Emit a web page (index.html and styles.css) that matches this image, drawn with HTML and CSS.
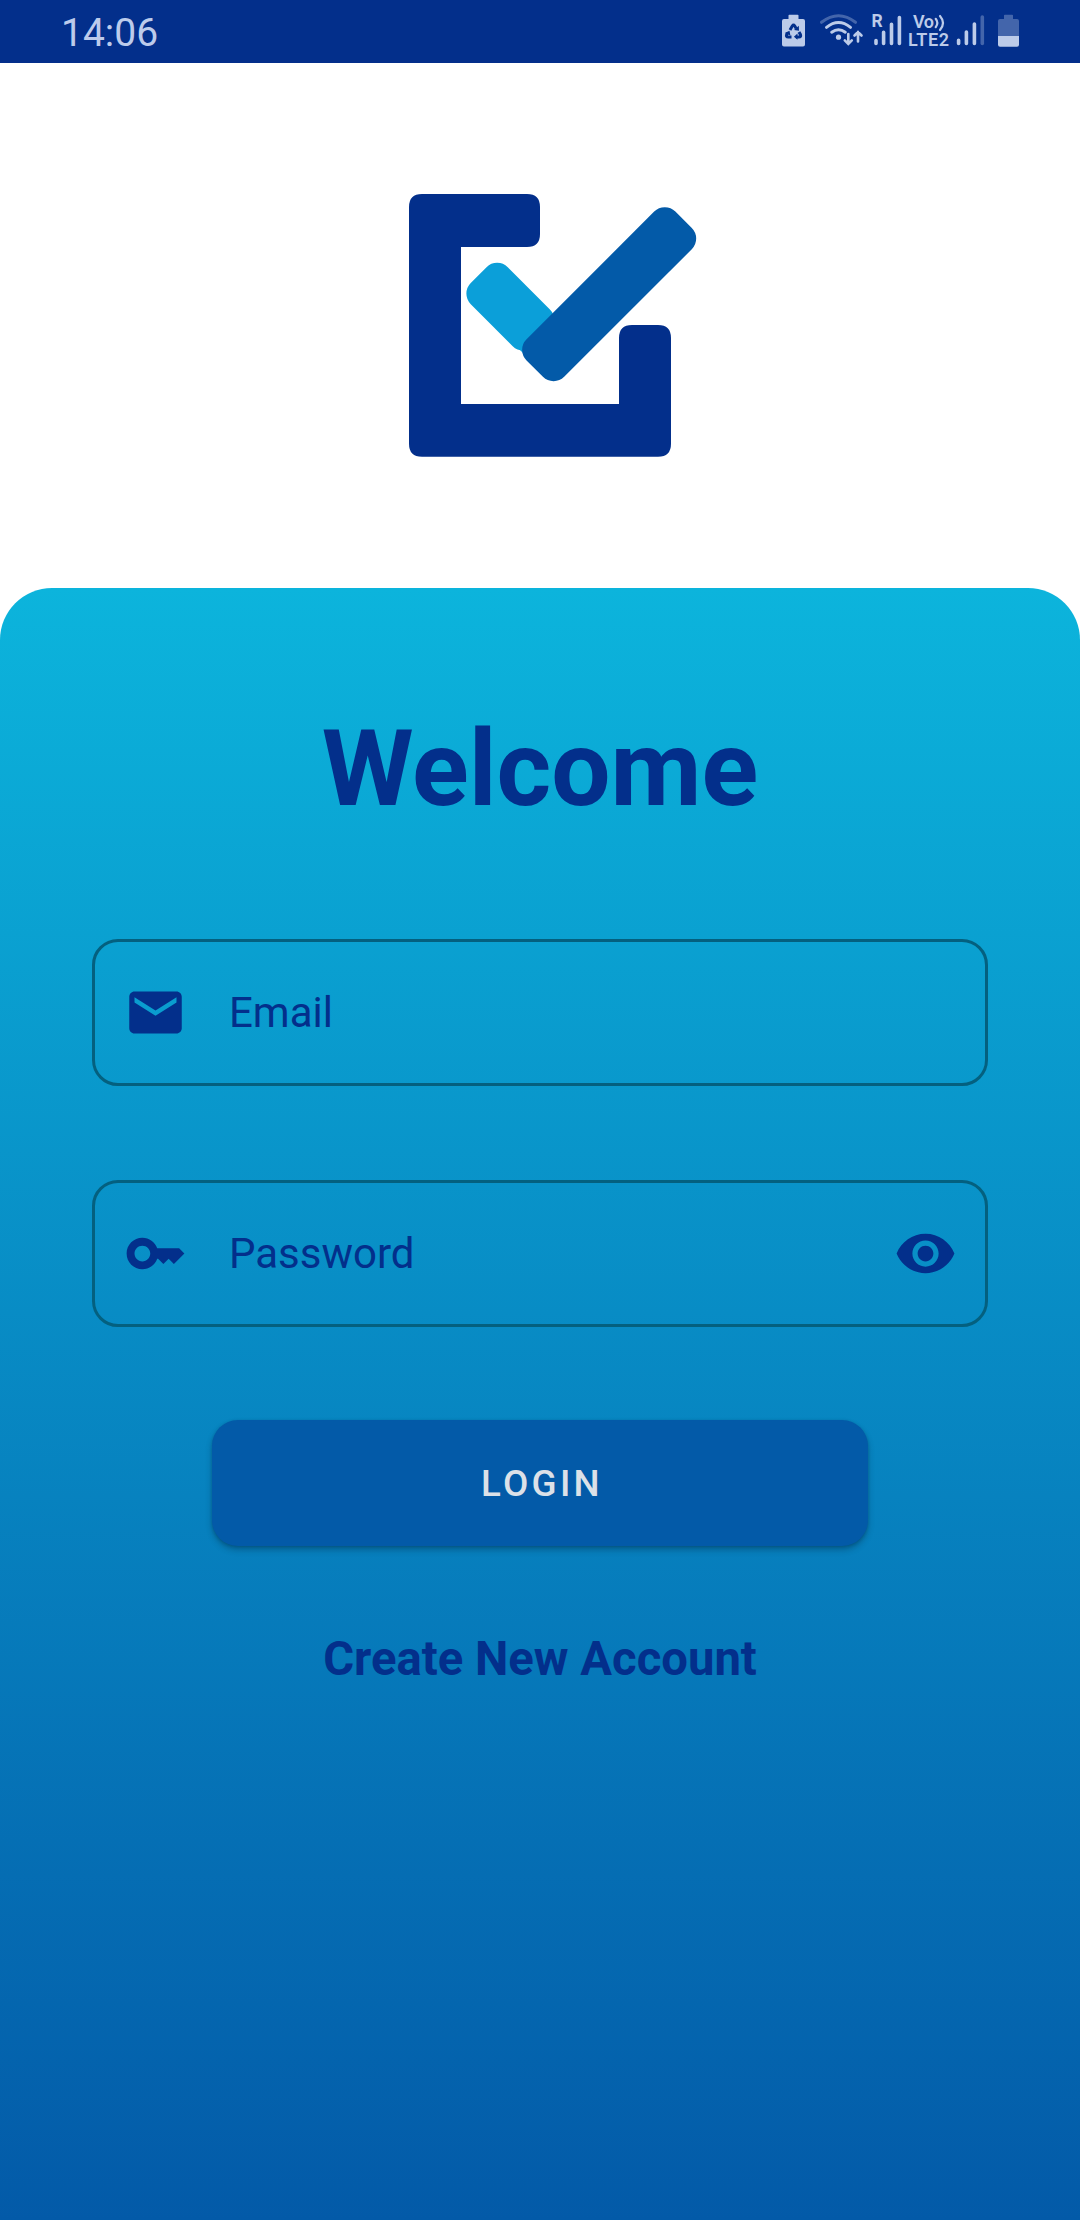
FILE: index.html
```html
<!DOCTYPE html>
<html lang="en">
<head>
<meta charset="utf-8">
<title>Login</title>
<link rel="stylesheet" href="styles.css">
</head>
<body>
<div class="screen">
  <header class="status">
    <span class="clock">14:06</span>
    <div class="indicators">
      <svg viewBox="780 0 36 63" width="36" height="63">
        <path d="M788.500 19v-3.500q0-.8.800-.8h8.400q.8 0 .8.800V19h4.500q2 0 2 2v23.500q0 2-2 2h-19q-2 0-2-2V21q0-2 2-2z"/>
        <g class="recycle">
          <path d="M790 30l2.400-4.200q1.100-1.600 2.200 0l1.600 2.700M799 32l1.500 2.700q.8 2.300-1.600 2.300H796M791.500 37h-3.300q-2.400 0-1.600-2.300l1-1.700"/>
          <path class="head" d="M794 30l5 .8-.2-5zM797.500 33.600v6.200l-3.600-3.100zM784.800 33l4.700-2.200.9 4.700z"/>
        </g>
      </svg>
      <svg viewBox="816 0 52 63" width="52" height="63">
        <circle cx="838.500" cy="37.200" r="2.600"/>
        <g class="line">
          <path class="dim" d="M821.500 22.300q17-13.200 34 0"/>
          <path d="M826.500 27.300q12-9.600 24 0M831.700 32.200q6.800-5 13.600 0"/>
          <path class="thin" d="M848.300 34v9.500M844.800 40.300l3.500 3.500 3.500-3.500M858 41.500V32M854.500 35.500l3.500-3.500 3.500 3.500"/>
        </g>
      </svg>
      <svg viewBox="868 0 38 63" width="38" height="63">
        <text class="roaming" x="871.500" y="26.500">R</text>
        <path class="bars" d="M876 40.500v3M883.600 32.300v11.200M891.500 24.300v19.200M899.400 17.500v26"/>
      </svg>
      <svg viewBox="906 0 46 63" width="46" height="63">
        <text class="net" x="913" y="28" textLength="21">Vo</text>
        <path class="waves" d="M935.700 18.800q3.300 4.200 0 8.400M940 16q6 7 0 14"/>
        <text class="net" x="908" y="45.700" textLength="41">LTE2</text>
      </svg>
      <svg viewBox="952 0 42 63" width="42" height="63">
        <path class="bars" d="M958.600 40.300v3.200M966.400 32v11.500M974.400 24v19.500"/>
        <path class="bars dim" d="M982.300 17v26.500"/>
      </svg>
      <svg viewBox="994 0 26 63" width="26" height="63">
        <path class="dim" d="M1004 19v-3.500q0-.8.800-.8h7.400q.8 0 .8.800V19h4q2 0 2 2v15h-21V21q0-2 2-2z"/>
        <path d="M998 36h21v8.700q0 2-2 2h-17q-2 0-2-2z"/>
      </svg>
    </div>
  </header>

  <div class="brand">
    <svg viewBox="409 194 288 263" width="288" height="263">
      <path fill="#032f8b" d="M422 194H527q13 0 13 13v27q0 13-13 13H461V404H619V338q0-13 13-13h26q13 0 13 13V443.700q0 13-13 13H422q-13 0-13-13V207q0-13 13-13z"/>
      <rect fill="#0b9fd9" x="465.600" y="280.600" width="89.300" height="52.300" rx="15" transform="rotate(45 510.300 306.700)"/>
      <path fill="#0b9fd9" d="M515 345l27-27 4 30-12 16z"/>
      <rect fill="#035aa8" x="503.900" y="267.600" width="210.500" height="53.200" rx="15" transform="rotate(-45 609.200 294.200)"/>
    </svg>
  </div>

  <main class="panel">
    <h1 class="title">Welcome</h1>
    <form class="form">
      <div class="field">
        <svg class="icon" viewBox="0 0 24 24"><path d="M20 4H4c-1.100 0-1.990.9-1.990 2L2 18c0 1.100.9 2 2 2h16c1.100 0 2-.9 2-2V6c0-1.100-.9-2-2-2zm0 4.200l-8 5-8-5V6.200l8 5 8-5v2z"/></svg>
        <span class="label">Email</span>
      </div>
      <div class="field">
        <svg class="icon" viewBox="0 0 24 24"><path d="M21 10h-8.350C11.830 7.670 9.610 6 7 6c-3.310 0-6 2.690-6 6s2.690 6 6 6c2.610 0 4.830-1.670 5.650-4H13l2 2 2-2 2 2 4-4.040L21 10zM7 15c-1.650 0-3-1.350-3-3s1.350-3 3-3 3 1.350 3 3-1.350 3-3 3z"/></svg>
        <span class="label">Password</span>
        <svg class="icon" viewBox="0 0 24 24"><path d="M12 4.500C7 4.500 2.730 7.610 1 12c1.730 4.390 6 7.500 11 7.500s9.270-3.110 11-7.500c-1.730-4.390-6-7.500-11-7.500zM12 17c-2.760 0-5-2.240-5-5s2.240-5 5-5 5 2.240 5 5-2.240 5-5 5zm0-8c-1.660 0-3 1.340-3 3s1.340 3 3 3 3-1.340 3-3-1.340-3-3-3z"/></svg>
      </div>
      <button class="login" type="button">LOGIN</button>
    </form>
    <a class="create">Create New Account</a>
  </main>
</div>
</body>
</html>
```
FILE: styles.css
```css
* { box-sizing: border-box; }
body { margin: 0; background: #fff; font-family: Roboto, sans-serif; }
.screen { width: 1080px; height: 2220px; display: flex; flex-direction: column; }

.status {
  height: 63px;
  padding: 0 60px 0 61px;
  background: #032f8b;
  color: #bccbeb;
  display: flex;
  justify-content: space-between;
}
.clock { font-size: 39px; line-height: 66px; }
.indicators { display: flex; }
.indicators svg { display: block; fill: #bccbe9; }
.indicators .dim { opacity: .35; }
.line path { fill: none; stroke: #bccbe9; stroke-width: 3; stroke-linecap: round; }
.line .thin { stroke-width: 2.6; }
.bars { fill: none; stroke: #bccbe9; stroke-width: 3.6; stroke-linecap: round; }
.waves { fill: none; stroke: #bccbe9; stroke-width: 2.2; stroke-linecap: round; }
.recycle path { fill: none; stroke: #032f8b; stroke-width: 3; }
.recycle .head { fill: #032f8b; stroke: none; }
.roaming { font-size: 17.500px; font-weight: 700; }
.net { font-size: 18px; font-weight: 600; }

.brand {
  height: 525px;
  padding: 131px 0 0 409px;
}
.brand svg { display: block; }

.panel {
  flex: 1;
  border-radius: 52px 52px 0 0;
  background: linear-gradient(#0cb4dc, #035aa8);
  padding-top: 120px;
  display: flex;
  flex-direction: column;
  align-items: center;
  color: #032f8b;
}
.title { margin: 0; font-size: 105px; line-height: 123px; font-weight: 700; }
.form {
  width: 896px;
  margin-top: 108px;
  display: flex;
  flex-direction: column;
  align-items: center;
}
.field {
  width: 100%;
  height: 147px;
  margin-bottom: 94px;
  padding: 0 28px 0 29px;
  border: 3px solid #04607f;
  border-radius: 26px;
  display: flex;
  align-items: center;
}
.icon { width: 63px; height: 63px; fill: #032f8b; }
.label { flex: 1; margin-left: 42px; font-size: 42px; line-height: 50px; }
.login {
  width: 656px;
  height: 126px;
  margin-top: -1px;
  padding: 0 0 0 4px;
  border: 0;
  border-radius: 26px;
  background: #035aa8;
  color: #dce1e8;
  font: 500 36.750px/128px Roboto, sans-serif;
  letter-spacing: .0893em;
  box-shadow: 0 4px 6px rgba(0, 30, 50, .3), 0 1px 3px rgba(0, 30, 50, .2);
}
.create { margin-top: 86px; font-size: 47.250px; line-height: 55px; font-weight: 700; }
```
